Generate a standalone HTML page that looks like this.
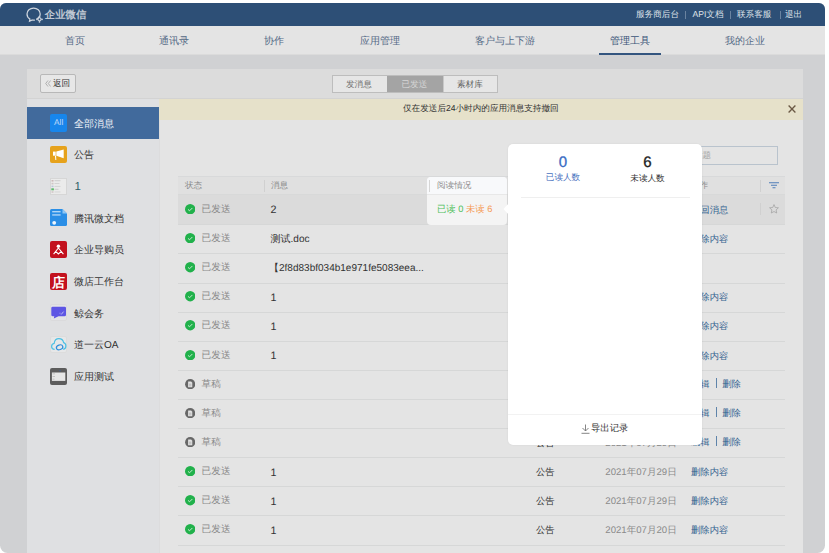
<!DOCTYPE html>
<html><head><meta charset="utf-8">
<style>
*{margin:0;padding:0;box-sizing:border-box}
html,body{width:829px;height:553px;overflow:hidden;background:#fff}
body{font-family:"Liberation Sans",sans-serif;font-size:10px;color:#333;position:relative}
.a{position:absolute}
.t{position:absolute;white-space:nowrap;text-rendering:geometricPrecision;font-weight:500}
#win{position:absolute;left:0;top:0;width:825px;height:553px;overflow:hidden;clip-path:inset(3px 0 0 0 round 6px 6px 7.5px 7.5px);background:#d0d1d3}
</style></head><body>
<div id="win">
<div class="a" style="left:0px;top:0px;width:825px;height:26px;background:#2d4f76"></div>
<svg class="a" style="left:26px;top:6.8px" width="19" height="16" viewBox="0 0 19 16">
  <path d="M10.6 12 C12.6 11 14.2 9.2 14.2 7 C14.2 3.6 11.3 1.1 7.6 1.1 C3.9 1.1 1 3.6 1 7 C1 9.1 2.1 10.9 3.9 12 L3.5 14.3 L6.3 13 C7.1 13.2 8 13.2 8.9 13.1" fill="none" stroke="#cdd4dd" stroke-width="1.25"/>
  <circle cx="13.5" cy="12.3" r="1.5" fill="none" stroke="#cdd4dd" stroke-width="1.1"/>
  <circle cx="13.5" cy="9.8" r="0.9" fill="#cdd4dd"/><circle cx="13.5" cy="14.8" r="0.9" fill="#cdd4dd"/>
  <circle cx="11" cy="12.3" r="0.9" fill="#cdd4dd"/><circle cx="16" cy="12.3" r="0.9" fill="#cdd4dd"/>
</svg>
<div class="t" style="left:44.80px;top:9.13px;font-size:10.396px;line-height:14.340px;color:#cdd4dc;font-weight:700;opacity:0.92">企业微信</div>
<div class="t" style="left:636.00px;top:8.31px;font-size:8.604px;line-height:12.189px;color:#dde2e9;">服务商后台</div>
<div class="t" style="left:692.50px;top:8.31px;font-size:8.604px;line-height:12.189px;color:#dde2e9;">API文档</div>
<div class="t" style="left:737.00px;top:8.31px;font-size:8.604px;line-height:12.189px;color:#dde2e9;">联系客服</div>
<div class="t" style="left:785.00px;top:8.31px;font-size:8.604px;line-height:12.189px;color:#dde2e9;">退出</div>
<div class="a" style="left:685px;top:11px;width:1px;height:8px;background:#6a83a0"></div>
<div class="a" style="left:729.5px;top:11px;width:1px;height:8px;background:#6a83a0"></div>
<div class="a" style="left:780px;top:11px;width:1px;height:8px;background:#6a83a0"></div>
<div class="a" style="left:0px;top:26px;width:825px;height:29px;background:#e4e4e4"></div>
<div class="t" style="left:64.96px;top:34.83px;font-size:10.038px;line-height:14.340px;color:#556a86;">首页</div>
<div class="t" style="left:158.94px;top:34.83px;font-size:10.038px;line-height:14.340px;color:#556a86;">通讯录</div>
<div class="t" style="left:263.96px;top:34.83px;font-size:10.038px;line-height:14.340px;color:#556a86;">协作</div>
<div class="t" style="left:359.92px;top:34.83px;font-size:10.038px;line-height:14.340px;color:#556a86;">应用管理</div>
<div class="t" style="left:474.89px;top:34.83px;font-size:10.038px;line-height:14.340px;color:#556a86;">客户与上下游</div>
<div class="t" style="left:609.92px;top:34.83px;font-size:10.038px;line-height:14.340px;color:#3a5478;">管理工具</div>
<div class="t" style="left:724.92px;top:34.83px;font-size:10.038px;line-height:14.340px;color:#556a86;">我的企业</div>
<div class="a" style="left:0px;top:54px;width:825px;height:1px;background:#dbdbdb"></div>
<div class="a" style="left:599px;top:53px;width:62px;height:2px;background:#33557f"></div>
<div class="a" style="left:27px;top:69px;width:776px;height:484px;background:#e4e4e4"></div>
<div class="a" style="left:27px;top:69px;width:776px;height:29px;background:#dcdcdc"></div>
<div class="a" style="left:40px;top:74px;width:36px;height:19px;border:1px solid #b8b8b8;border-radius:2px;background:#e7e7e7"></div>
<svg class="a" style="left:45px;top:80px" width="6" height="7" viewBox="0 0 6 7"><path d="M3 0.5L0.7 3.5L3 6.5M5.6 0.5L3.3 3.5L5.6 6.5" fill="none" stroke="#a9a9a9" stroke-width="0.9"/></svg>
<div class="t" style="left:53.00px;top:76.91px;font-size:8.604px;line-height:12.189px;color:#333;">返回</div>
<div class="a" style="left:332px;top:75px;width:166px;height:18px;border:1px solid #bdbdbd;background:#e6e6e6"></div>
<div class="a" style="left:387px;top:76px;width:56px;height:16px;background:#a4a4a4"></div>
<div class="a" style="left:443px;top:76px;width:1px;height:16px;background:#c8c8c8"></div>
<div class="t" style="left:346.00px;top:78.31px;font-size:8.604px;line-height:12.189px;color:#707070;">发消息</div>
<div class="t" style="left:401.50px;top:78.31px;font-size:8.604px;line-height:12.189px;color:#d6d6d6;">已发送</div>
<div class="t" style="left:457.00px;top:78.31px;font-size:8.604px;line-height:12.189px;color:#606060;">素材库</div>
<div class="a" style="left:27px;top:98px;width:132px;height:455px;background:#dfe0e2"></div>
<div class="a" style="left:159px;top:98px;width:1px;height:455px;background:#dcdcdd"></div>
<div class="a" style="left:27px;top:107px;width:132px;height:31.5px;background:#416a9c"></div>
<div class="a" style="left:50.2px;top:114.3px;width:17px;height:17.4px;background:#1786ec;border-radius:2px"></div><div class="t" style="left:50.2px;top:114.2px;width:17px;text-align:center;font-size:8.3px;line-height:17px;color:#c2dbf8;font-weight:400">All</div>
<div class="t" style="left:74.00px;top:117.63px;font-size:10.038px;line-height:14.340px;color:#f0f3f8;">全部消息</div>
<svg class="a" style="left:50px;top:145.95px" width="17" height="17" viewBox="0 0 17 17"><rect width="17" height="17" rx="2" fill="#e6a21c"/><rect x="3" y="5.6" width="2.7" height="4.1" fill="#fff"/><path d="M6.3 5.6L13.7 3.6V12.2L6.3 9.7Z" fill="#fff"/><path d="M4.9 9.7L5.4 14H6.3L6.1 9.7Z" fill="#fff"/></svg>
<div class="t" style="left:74.00px;top:149.28px;font-size:10.038px;line-height:14.340px;color:#333;">公告</div>
<svg class="a" style="left:50px;top:177.6px" width="17" height="17" viewBox="0 0 17 17"><rect x="0.5" y="0.5" width="16" height="16" fill="#ebebeb" stroke="#d6d6d6"/><rect x="1.5" y="2" width="2" height="1.6" fill="#cbb8b8"/><rect x="4.5" y="2.3" width="6" height="0.9" fill="#c8c8c8"/><rect x="1.5" y="4.8" width="2" height="1.6" fill="#d0c4c4"/><rect x="4.5" y="5.1" width="5" height="0.9" fill="#d0d0d0"/><rect x="1.5" y="7.6" width="2" height="1.6" fill="#b9c6d6"/><rect x="4.5" y="7.9" width="6" height="0.9" fill="#d0d0d0"/><rect x="1.3" y="10.3" width="2.6" height="2" fill="#5cb86a"/><rect x="4.5" y="10.8" width="4" height="0.9" fill="#c9c9c9"/><rect x="1.5" y="13.2" width="2" height="1.6" fill="#d2c6c6"/><rect x="4.5" y="13.5" width="6" height="0.9" fill="#d3d3d3"/></svg>
<div class="t" style="left:74.50px;top:179.61px;font-size:11.472px;line-height:15.774px;color:#2e5b66;">1</div>
<svg class="a" style="left:50px;top:209.25px" width="17" height="17" viewBox="0 0 17 17"><path d="M1.5 0H12.5L17 4.5V15.5Q17 17 15.5 17H1.5Q0 17 0 15.5V1.5Q0 0 1.5 0Z" fill="#2a8ee6"/><path d="M12.5 0V4.5H17Z" fill="#8fc7f5"/><rect x="2.2" y="2.2" width="8.4" height="1.1" fill="#cfe6fb"/><rect x="2.2" y="5.4" width="8.4" height="1.1" fill="#cfe6fb"/><circle cx="4.2" cy="13.8" r="1.9" fill="#eef6fd"/></svg>
<div class="t" style="left:74.00px;top:212.58px;font-size:10.038px;line-height:14.340px;color:#333;">腾讯微文档</div>
<svg class="a" style="left:50px;top:240.9px" width="17" height="17" viewBox="0 0 17 17"><rect width="17" height="17" rx="2" fill="#c3111e"/><circle cx="8.4" cy="5.2" r="1.7" fill="#fff"/><path d="M8.4 7L3.6 13.2M8.4 7L13.4 13.2M5.6 10.4L8.4 13L11.3 10.4" fill="none" stroke="#fff" stroke-width="1.1"/></svg>
<div class="t" style="left:74.00px;top:244.23px;font-size:10.038px;line-height:14.340px;color:#333;">企业导购员</div>
<svg class="a" style="left:50px;top:272.55px" width="17" height="17" viewBox="0 0 17 17"><rect width="17" height="17" rx="2" fill="#c3111e"/><text x="8.6" y="14" text-anchor="middle" font-size="13" fill="#fff" font-weight="700">店</text></svg>
<div class="t" style="left:74.00px;top:275.88px;font-size:10.038px;line-height:14.340px;color:#333;">微店工作台</div>
<svg class="a" style="left:50px;top:304.2px" width="17" height="17" viewBox="0 0 17 17"><rect x="0.5" y="0.5" width="16" height="16" rx="1.5" fill="#e3e3e6" stroke="#dadadc"/><path d="M1.3 4Q1.3 2.7 2.7 2.7H14.6Q16 2.7 16 4V10.8Q16 12.3 14.6 12.3H8.5L3.8 14.6L4.3 12.3H2.7Q1.3 12.3 1.3 10.8Z" fill="#5d55e4"/><path d="M11.2 10.5L13.6 7.6" stroke="#c8c6f6" stroke-width="0.9"/><circle cx="10" cy="9.2" r="0.6" fill="#9d98f0"/></svg>
<div class="t" style="left:74.00px;top:307.53px;font-size:10.038px;line-height:14.340px;color:#333;">鲸会务</div>
<svg class="a" style="left:50px;top:335.85px" width="17" height="17" viewBox="0 0 17 17"><rect x="0.5" y="0.5" width="16" height="16" rx="1.5" fill="#e6e7e8" stroke="#dcdcdc"/><path d="M4.6 13.4Q1.6 13.4 1.6 10.4Q1.6 7.7 4.2 7.3Q4.7 2.6 8.9 2.6Q12.9 2.6 13.6 6.6Q15.9 7.3 15.9 10.1Q15.9 13 13.2 13.4" fill="none" stroke="#4cc0e4" stroke-width="1.2"/><ellipse cx="9.6" cy="11.3" rx="3.3" ry="2.3" transform="rotate(-20 9.6 11.3)" fill="none" stroke="#2f8fdc" stroke-width="1.2"/></svg>
<div class="t" style="left:74.00px;top:339.18px;font-size:10.038px;line-height:14.340px;color:#333;">道一云OA</div>
<svg class="a" style="left:50px;top:367.5px" width="17" height="17" viewBox="0 0 17 17"><rect width="17" height="17" rx="2" fill="#5c5c5c"/><rect x="1.9" y="4.5" width="13.4" height="8.4" fill="#e6e6e6"/><rect x="9" y="2.2" width="2" height="1" fill="#4a5f80"/><rect x="2.5" y="5.6" width="2.5" height="0.6" fill="#aaa"/><rect x="2.5" y="8.2" width="2.5" height="0.6" fill="#aaa"/><rect x="2.5" y="10.8" width="2" height="0.6" fill="#aaa"/></svg>
<div class="t" style="left:74.00px;top:370.83px;font-size:10.038px;line-height:14.340px;color:#333;">应用测试</div>
<div class="a" style="left:159px;top:99px;width:644px;height:20.6px;background:#e6e1ca"></div>
<div class="a" style="left:27px;top:98px;width:776px;height:1px;background:#d3d3d3"></div>
<div class="t" style="left:403.00px;top:102.31px;font-size:8.604px;line-height:12.189px;color:#333;">仅在发送后24小时内的应用消息支持撤回</div>
<svg class="a" style="left:788px;top:105px" width="8" height="8" viewBox="0 0 8 8"><path d="M0.6 0.6L7.4 7.4M7.4 0.6L0.6 7.4" stroke="#6b5945" stroke-width="1.35"/></svg>
<div class="a" style="left:628px;top:146px;width:150px;height:18.5px;border:1px solid #b9c3cd;background:#e4e4e4"></div>
<div class="t" style="left:659.50px;top:149.21px;font-size:8.604px;line-height:12.189px;color:#a6a6a6;">搜索消息标题</div>
<div class="a" style="left:178px;top:175.5px;width:607px;height:19px;background:#e0e0e0;border-top:1px solid #d8d9da;border-bottom:1px solid #d8d9d9"></div>
<div class="t" style="left:185.00px;top:179.11px;font-size:8.604px;line-height:12.189px;color:#8c8c8c;">状态</div>
<div class="t" style="left:271.00px;top:179.11px;font-size:8.604px;line-height:12.189px;color:#8c8c8c;">消息</div>
<div class="t" style="left:536.00px;top:179.11px;font-size:8.604px;line-height:12.189px;color:#8c8c8c;">类型</div>
<div class="t" style="left:605.00px;top:179.11px;font-size:8.604px;line-height:12.189px;color:#8c8c8c;">发送时间</div>
<div class="t" style="left:691.00px;top:179.11px;font-size:8.604px;line-height:12.189px;color:#8c8c8c;">操作</div>
<div class="a" style="left:264px;top:180px;width:1px;height:12px;background:#d0d0d0"></div>
<div class="a" style="left:760px;top:180px;width:1px;height:12px;background:#d0d0d0"></div>
<svg class="a" style="left:769px;top:182px" width="10" height="7" viewBox="0 0 10 7"><path d="M0 0.75H10M2 3.25H8M3.5 5.75H6.5" stroke="#4f7db8" stroke-width="1.2"/></svg>
<div class="a" style="left:178px;top:194.50px;width:607px;height:30.80px;background:#dbdbdb;border-bottom:1px solid #d6d7d7"></div>
<svg class="a" style="left:184.8px;top:203.60px" width="10.4" height="10.4" viewBox="0 0 10 10"><circle cx="5" cy="5" r="5" fill="#21b14b"/><path d="M2.9 5.2L4.4 6.5L7.1 3.8" fill="none" stroke="#d8f0de" stroke-width="0.85"/></svg>
<div class="t" style="left:201.60px;top:202.59px;font-size:9.679px;line-height:13.623px;color:#8a8a8a;">已发送</div>
<div class="t" style="left:270.50px;top:203.47px;font-size:10.755px;line-height:15.057px;color:#333;">2</div>
<div class="t" style="left:691.00px;top:203.65px;font-size:9.321px;line-height:12.906px;color:#32628f;">撤回消息</div>
<div class="a" style="left:760px;top:203.4px;width:1px;height:12px;background:#d0d0d0"></div>
<svg class="a" style="left:768.5px;top:204.40px" width="10" height="10" viewBox="0 0 10 10"><path d="M5 0.6L6.3 3.5L9.4 3.8L7.1 5.9L7.7 9L5 7.5L2.3 9L2.9 5.9L0.6 3.8L3.7 3.5Z" fill="none" stroke="#a5a5a5" stroke-width="0.8"/></svg>
<div class="a" style="left:178px;top:224.30px;width:607px;height:30.12px;border-bottom:1px solid #d6d7d7"></div>
<svg class="a" style="left:184.8px;top:233.06px" width="10.4" height="10.4" viewBox="0 0 10 10"><circle cx="5" cy="5" r="5" fill="#21b14b"/><path d="M2.9 5.2L4.4 6.5L7.1 3.8" fill="none" stroke="#d8f0de" stroke-width="0.85"/></svg>
<div class="t" style="left:201.60px;top:232.05px;font-size:9.679px;line-height:13.623px;color:#8a8a8a;">已发送</div>
<div class="t" style="left:270.50px;top:232.69px;font-size:10.038px;line-height:14.340px;color:#333;">测试.doc</div>
<div class="t" style="left:691.00px;top:233.11px;font-size:9.321px;line-height:12.906px;color:#32628f;">删除内容</div>
<div class="a" style="left:178px;top:253.42px;width:607px;height:30.12px;border-bottom:1px solid #d6d7d7"></div>
<svg class="a" style="left:184.8px;top:262.18px" width="10.4" height="10.4" viewBox="0 0 10 10"><circle cx="5" cy="5" r="5" fill="#21b14b"/><path d="M2.9 5.2L4.4 6.5L7.1 3.8" fill="none" stroke="#d8f0de" stroke-width="0.85"/></svg>
<div class="t" style="left:201.60px;top:261.17px;font-size:9.679px;line-height:13.623px;color:#8a8a8a;">已发送</div>
<div class="t" style="left:269.00px;top:261.81px;font-size:10.038px;line-height:14.340px;color:#333;">【2f8d83bf034b1e971fe5083eea...</div>
<div class="a" style="left:178px;top:282.54px;width:607px;height:30.12px;border-bottom:1px solid #d6d7d7"></div>
<svg class="a" style="left:184.8px;top:291.30px" width="10.4" height="10.4" viewBox="0 0 10 10"><circle cx="5" cy="5" r="5" fill="#21b14b"/><path d="M2.9 5.2L4.4 6.5L7.1 3.8" fill="none" stroke="#d8f0de" stroke-width="0.85"/></svg>
<div class="t" style="left:201.60px;top:290.29px;font-size:9.679px;line-height:13.623px;color:#8a8a8a;">已发送</div>
<div class="t" style="left:270.50px;top:291.17px;font-size:10.755px;line-height:15.057px;color:#333;">1</div>
<div class="t" style="left:691.00px;top:291.35px;font-size:9.321px;line-height:12.906px;color:#32628f;">删除内容</div>
<div class="a" style="left:178px;top:311.66px;width:607px;height:30.12px;border-bottom:1px solid #d6d7d7"></div>
<svg class="a" style="left:184.8px;top:320.42px" width="10.4" height="10.4" viewBox="0 0 10 10"><circle cx="5" cy="5" r="5" fill="#21b14b"/><path d="M2.9 5.2L4.4 6.5L7.1 3.8" fill="none" stroke="#d8f0de" stroke-width="0.85"/></svg>
<div class="t" style="left:201.60px;top:319.41px;font-size:9.679px;line-height:13.623px;color:#8a8a8a;">已发送</div>
<div class="t" style="left:270.50px;top:320.29px;font-size:10.755px;line-height:15.057px;color:#333;">1</div>
<div class="t" style="left:691.00px;top:320.47px;font-size:9.321px;line-height:12.906px;color:#32628f;">删除内容</div>
<div class="a" style="left:178px;top:340.78px;width:607px;height:30.12px;border-bottom:1px solid #d6d7d7"></div>
<svg class="a" style="left:184.8px;top:349.54px" width="10.4" height="10.4" viewBox="0 0 10 10"><circle cx="5" cy="5" r="5" fill="#21b14b"/><path d="M2.9 5.2L4.4 6.5L7.1 3.8" fill="none" stroke="#d8f0de" stroke-width="0.85"/></svg>
<div class="t" style="left:201.60px;top:348.53px;font-size:9.679px;line-height:13.623px;color:#8a8a8a;">已发送</div>
<div class="t" style="left:270.50px;top:349.41px;font-size:10.755px;line-height:15.057px;color:#333;">1</div>
<div class="t" style="left:691.00px;top:349.59px;font-size:9.321px;line-height:12.906px;color:#32628f;">删除内容</div>
<div class="a" style="left:178px;top:369.90px;width:607px;height:30.12px;border-bottom:1px solid #d6d7d7"></div>
<svg class="a" style="left:184.8px;top:378.66px" width="10.4" height="10.4" viewBox="0 0 10 10"><circle cx="5" cy="5" r="4.9" fill="#676767"/><path d="M3 2.4H5.9L7 3.5V7.9H3Z" fill="#e4e4e4"/><path d="M3.8 5H6.2M3.8 6.6H6.2" stroke="#9a9a9a" stroke-width="0.6"/></svg>
<div class="t" style="left:201.60px;top:377.65px;font-size:9.679px;line-height:13.623px;color:#8a8a8a;">草稿</div>
<div class="t" style="left:536.00px;top:378.71px;font-size:9.321px;line-height:12.906px;color:#333;">公告</div>
<div class="t" style="left:605.30px;top:378.35px;font-size:9.608px;line-height:13.623px;color:#8a8a8a;">2021年07月29日</div>
<div class="t" style="left:691.00px;top:377.71px;font-size:9.321px;line-height:12.906px;color:#32628f;">编辑<span style="display:inline-block;width:1px;height:10px;background:#5f84aa;margin:0 5.5px 0 6px;vertical-align:-1.5px"></span>删除</div>
<div class="a" style="left:178px;top:399.02px;width:607px;height:30.12px;border-bottom:1px solid #d6d7d7"></div>
<svg class="a" style="left:184.8px;top:407.78px" width="10.4" height="10.4" viewBox="0 0 10 10"><circle cx="5" cy="5" r="4.9" fill="#676767"/><path d="M3 2.4H5.9L7 3.5V7.9H3Z" fill="#e4e4e4"/><path d="M3.8 5H6.2M3.8 6.6H6.2" stroke="#9a9a9a" stroke-width="0.6"/></svg>
<div class="t" style="left:201.60px;top:406.77px;font-size:9.679px;line-height:13.623px;color:#8a8a8a;">草稿</div>
<div class="t" style="left:536.00px;top:407.83px;font-size:9.321px;line-height:12.906px;color:#333;">公告</div>
<div class="t" style="left:605.30px;top:407.47px;font-size:9.608px;line-height:13.623px;color:#8a8a8a;">2021年07月29日</div>
<div class="t" style="left:691.00px;top:406.83px;font-size:9.321px;line-height:12.906px;color:#32628f;">编辑<span style="display:inline-block;width:1px;height:10px;background:#5f84aa;margin:0 5.5px 0 6px;vertical-align:-1.5px"></span>删除</div>
<div class="a" style="left:178px;top:428.14px;width:607px;height:30.12px;border-bottom:1px solid #d6d7d7"></div>
<svg class="a" style="left:184.8px;top:436.90px" width="10.4" height="10.4" viewBox="0 0 10 10"><circle cx="5" cy="5" r="4.9" fill="#676767"/><path d="M3 2.4H5.9L7 3.5V7.9H3Z" fill="#e4e4e4"/><path d="M3.8 5H6.2M3.8 6.6H6.2" stroke="#9a9a9a" stroke-width="0.6"/></svg>
<div class="t" style="left:201.60px;top:435.89px;font-size:9.679px;line-height:13.623px;color:#8a8a8a;">草稿</div>
<div class="t" style="left:536.00px;top:436.95px;font-size:9.321px;line-height:12.906px;color:#333;">公告</div>
<div class="t" style="left:605.30px;top:436.59px;font-size:9.608px;line-height:13.623px;color:#8a8a8a;">2021年07月29日</div>
<div class="t" style="left:691.00px;top:435.95px;font-size:9.321px;line-height:12.906px;color:#32628f;">编辑<span style="display:inline-block;width:1px;height:10px;background:#5f84aa;margin:0 5.5px 0 6px;vertical-align:-1.5px"></span>删除</div>
<div class="a" style="left:178px;top:457.26px;width:607px;height:30.12px;border-bottom:1px solid #d6d7d7"></div>
<svg class="a" style="left:184.8px;top:466.02px" width="10.4" height="10.4" viewBox="0 0 10 10"><circle cx="5" cy="5" r="5" fill="#21b14b"/><path d="M2.9 5.2L4.4 6.5L7.1 3.8" fill="none" stroke="#d8f0de" stroke-width="0.85"/></svg>
<div class="t" style="left:201.60px;top:465.01px;font-size:9.679px;line-height:13.623px;color:#8a8a8a;">已发送</div>
<div class="t" style="left:270.50px;top:465.89px;font-size:10.755px;line-height:15.057px;color:#333;">1</div>
<div class="t" style="left:536.00px;top:466.07px;font-size:9.321px;line-height:12.906px;color:#333;">公告</div>
<div class="t" style="left:605.30px;top:465.71px;font-size:9.608px;line-height:13.623px;color:#8a8a8a;">2021年07月29日</div>
<div class="t" style="left:691.00px;top:466.07px;font-size:9.321px;line-height:12.906px;color:#32628f;">删除内容</div>
<div class="a" style="left:178px;top:486.38px;width:607px;height:30.12px;border-bottom:1px solid #d6d7d7"></div>
<svg class="a" style="left:184.8px;top:495.14px" width="10.4" height="10.4" viewBox="0 0 10 10"><circle cx="5" cy="5" r="5" fill="#21b14b"/><path d="M2.9 5.2L4.4 6.5L7.1 3.8" fill="none" stroke="#d8f0de" stroke-width="0.85"/></svg>
<div class="t" style="left:201.60px;top:494.13px;font-size:9.679px;line-height:13.623px;color:#8a8a8a;">已发送</div>
<div class="t" style="left:270.50px;top:495.01px;font-size:10.755px;line-height:15.057px;color:#333;">1</div>
<div class="t" style="left:536.00px;top:495.19px;font-size:9.321px;line-height:12.906px;color:#333;">公告</div>
<div class="t" style="left:605.30px;top:494.83px;font-size:9.608px;line-height:13.623px;color:#8a8a8a;">2021年07月29日</div>
<div class="t" style="left:691.00px;top:495.19px;font-size:9.321px;line-height:12.906px;color:#32628f;">删除内容</div>
<div class="a" style="left:178px;top:515.50px;width:607px;height:30.12px;border-bottom:1px solid #d6d7d7"></div>
<svg class="a" style="left:184.8px;top:524.26px" width="10.4" height="10.4" viewBox="0 0 10 10"><circle cx="5" cy="5" r="5" fill="#21b14b"/><path d="M2.9 5.2L4.4 6.5L7.1 3.8" fill="none" stroke="#d8f0de" stroke-width="0.85"/></svg>
<div class="t" style="left:201.60px;top:523.25px;font-size:9.679px;line-height:13.623px;color:#8a8a8a;">已发送</div>
<div class="t" style="left:270.50px;top:524.13px;font-size:10.755px;line-height:15.057px;color:#333;">1</div>
<div class="t" style="left:536.00px;top:524.31px;font-size:9.321px;line-height:12.906px;color:#333;">公告</div>
<div class="t" style="left:605.30px;top:523.95px;font-size:9.608px;line-height:13.623px;color:#8a8a8a;">2021年07月20日</div>
<div class="t" style="left:691.00px;top:524.31px;font-size:9.321px;line-height:12.906px;color:#32628f;">删除内容</div>
<div class="a" style="left:427px;top:177px;width:80px;height:47.5px;border-radius:4px;background:#f4f4f4;overflow:hidden"><div style="position:absolute;left:0;top:0;width:80px;height:17.5px;background:#f8f9fb;border-bottom:1px solid #e8e8e8"></div><div style="position:absolute;left:2px;top:3px;width:1px;height:12px;background:#d6d6d6"></div></div>
<div class="t" style="left:437.00px;top:179.21px;font-size:8.604px;line-height:12.189px;color:#8c8c8c;">阅读情况</div>
<div class="t" style="left:437.00px;top:202.75px;font-size:9.321px;line-height:12.906px;color:#4fbf5c;">已读 0 <span style="color:#f59a55">未读 6</span></div>
<div class="a" style="left:508px;top:144px;width:194px;height:301px;border-radius:5px;background:#fff;box-shadow:0 0 2px rgba(0,0,0,0.08)"></div>
<svg class="a" style="left:503px;top:203.3px" width="6" height="12" viewBox="0 0 6 12"><path d="M6 0L0.5 6L6 12Z" fill="#fff"/></svg>
<div class="a" style="left:521px;top:196.5px;width:169px;height:1px;background:#efefef"></div>
<div class="a" style="left:508px;top:413.5px;width:194px;height:1px;background:#f2f2f2"></div>
<div class="t" style="left:463.00px;top:152.90px;width:200px;text-align:center;font-size:15.057px;line-height:20.793px;color:#3a6cc4;-webkit-text-stroke:0.3px #3a6cc4">0</div>
<div class="t" style="left:463.00px;top:170.91px;width:200px;text-align:center;font-size:8.604px;line-height:12.189px;color:#4a72c0;">已读人数</div>
<div class="t" style="left:547.50px;top:152.90px;width:200px;text-align:center;font-size:15.057px;line-height:20.793px;color:#222;-webkit-text-stroke:0.3px #222">6</div>
<div class="t" style="left:547.50px;top:171.61px;width:200px;text-align:center;font-size:8.604px;line-height:12.189px;color:#333;">未读人数</div>
<svg class="a" style="left:581px;top:424px" width="9" height="10" viewBox="0 0 9 10"><path d="M4.5 0.5V7M1.5 4L4.5 7L7.5 4M0.5 9.3H8.5" fill="none" stroke="#777" stroke-width="0.9"/></svg>
<div class="t" style="left:591.00px;top:422.05px;font-size:9.321px;line-height:12.906px;color:#333;">导出记录</div>
</div>
</body></html>
